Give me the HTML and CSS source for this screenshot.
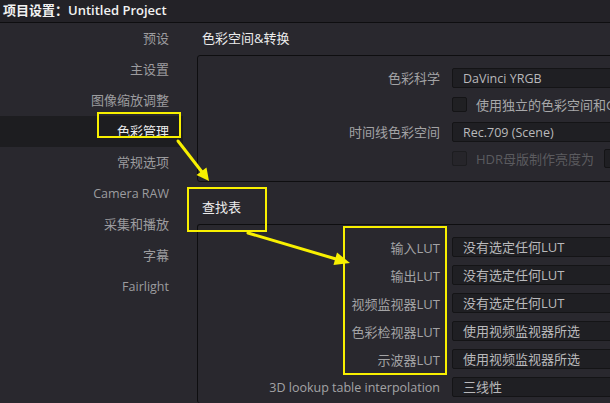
FILE: index.html
```html
<!DOCTYPE html>
<html lang="zh-CN">
<head>
<meta charset="utf-8">
<title>项目设置</title>
<link rel="stylesheet" href="styles.css">
</head>
<body>
<div class="app">
  <header class="titlebar">项目设置：Untitled Project</header>
  <div class="body">
    <nav class="sidebar">
      <div class="nav-item">预设</div>
      <div class="nav-item">主设置</div>
      <div class="nav-item">图像缩放调整</div>
      <div class="nav-item active">色彩管理</div>
      <div class="nav-item">常规选项</div>
      <div class="nav-item latin">Camera RAW</div>
      <div class="nav-item">采集和播放</div>
      <div class="nav-item">字幕</div>
      <div class="nav-item latin">Fairlight</div>
    </nav>
    <main class="main">
      <div class="section-title">色彩空间&amp;转换</div>
      <section class="panel panel-color">
        <div class="row">
          <div class="label">色彩科学</div>
          <div class="select latin">DaVinci YRGB</div>
        </div>
        <div class="row">
          <div class="label"></div>
          <div class="check-row"><span class="checkbox"></span><span class="check-text">使用独立的色彩空间和Gamma</span></div>
        </div>
        <div class="row">
          <div class="label">时间线色彩空间</div>
          <div class="select latin">Rec.709 (Scene)</div>
        </div>
        <div class="row">
          <div class="label"></div>
          <div class="check-row disabled"><span class="checkbox"></span><span class="check-text">HDR母版制作亮度为</span><span class="mini-box"></span></div>
        </div>
      </section>
      <div class="section-title second">查找表</div>
      <section class="panel panel-lut">
        <div class="row lut"><div class="label">输入LUT</div><div class="select">没有选定任何LUT</div></div>
        <div class="row lut"><div class="label">输出LUT</div><div class="select">没有选定任何LUT</div></div>
        <div class="row lut"><div class="label">视频监视器LUT</div><div class="select">没有选定任何LUT</div></div>
        <div class="row lut"><div class="label">色彩检视器LUT</div><div class="select">使用视频监视器所选</div></div>
        <div class="row lut"><div class="label">示波器LUT</div><div class="select">使用视频监视器所选</div></div>
        <div class="row lut"><div class="label latin">3D lookup table interpolation</div><div class="select">三线性</div></div>
      </section>
    </main>
  </div>
  <svg class="annotations" width="610" height="403" viewBox="0 0 610 403">
    <g fill="none" stroke="#f8f000" stroke-width="2">
      <rect x="98" y="113" width="82" height="24"/>
      <rect x="188" y="188" width="78" height="43"/>
      <rect x="344" y="227" width="102" height="147"/>
    </g>
    <g stroke="#f8f000" stroke-width="3" stroke-linecap="round">
      <line x1="178" y1="141" x2="202" y2="172"/>
      <line x1="248" y1="233" x2="336" y2="259"/>
    </g>
    <g fill="#f8f000">
      <polygon points="209,181 196.5,175 206.5,167.5"/>
      <polygon points="350,263 333.5,265 337,252.5"/>
    </g>
  </svg>
</div>
</body>
</html>
```

FILE: styles.css
```css
* { box-sizing: border-box; }

html, body {
  margin: 0;
  padding: 0;
}

body {
  width: 610px;
  height: 403px;
  overflow: hidden;
  background: #29282e;
  font-family: "Open Sans", "Noto Sans CJK SC", sans-serif;
  font-size: 13px;
  color: #a3a3a5;
}

.latin {
  font-size: 12.5px;
}

.app {
  position: relative;
  width: 610px;
  height: 403px;
  overflow: hidden;
}

.titlebar {
  height: 23px;
  line-height: 21px;
  padding-left: 3px;
  background: #232227;
  border-bottom: 1px solid #0e0e10;
  color: #f2f2f2;
  font-weight: 600;
  font-size: 13px;
  white-space: nowrap;
}

.body {
  display: flex;
  height: 380px;
}

.sidebar {
  width: 197px;
  flex: none;
  display: flex;
  flex-direction: column;
}

.nav-item {
  height: 31px;
  line-height: 31px;
  width: 183px;
  padding-right: 14px;
  text-align: right;
  color: #9c9c9f;
  white-space: nowrap;
}

.nav-item.active {
  background: #1d1d20;
  color: #ececec;
}

.main {
  flex: 1;
  min-width: 0;
  display: flex;
  flex-direction: column;
}

.section-title {
  height: 32px;
  line-height: 31px;
  padding-left: 5px;
  color: #ececec;
  white-space: nowrap;
}

.section-title.second {
  margin-top: 10px;
}

.panel {
  width: 460px;
  border: 1px solid #0e0e10;
  border-radius: 3px;
  background: #29282e;
}

.panel-color {
  height: 127px;
  padding-top: 8px;
}

.panel-lut {
  flex: 1;
  padding-top: 8px;
  border-bottom: none;
}

.row {
  display: grid;
  grid-template-columns: 242px 1fr;
  column-gap: 12px;
  align-items: center;
  height: 27px;
}

.row.lut {
  height: 28px;
}

.label {
  text-align: right;
  white-space: nowrap;
  color: #a3a3a5;
}

.select {
  height: 20px;
  line-height: 19px;
  padding-left: 10px;
  background: #1f1f23;
  border: 1px solid #141416;
  border-radius: 2px;
  color: #b9b9bb;
  white-space: nowrap;
  overflow: hidden;
}

.check-row {
  display: flex;
  align-items: center;
  white-space: nowrap;
  overflow: hidden;
}

.checkbox {
  width: 15px;
  height: 15px;
  flex: none;
  background: #202023;
  border: 1px solid #141416;
  border-radius: 2px;
}

.check-text {
  margin-left: 9px;
  color: #a8a8aa;
}

.check-row.disabled .checkbox {
  background: #26252a;
  border-color: #1d1d20;
}

.check-row.disabled .check-text {
  color: #5b5b5f;
}

.mini-box {
  width: 40px;
  height: 19px;
  margin-left: 10px;
  flex: none;
  background: #1f1f23;
  border: 1px solid #141416;
  border-radius: 2px;
}

.annotations {
  position: absolute;
  left: 0;
  top: 0;
  pointer-events: none;
}
```
